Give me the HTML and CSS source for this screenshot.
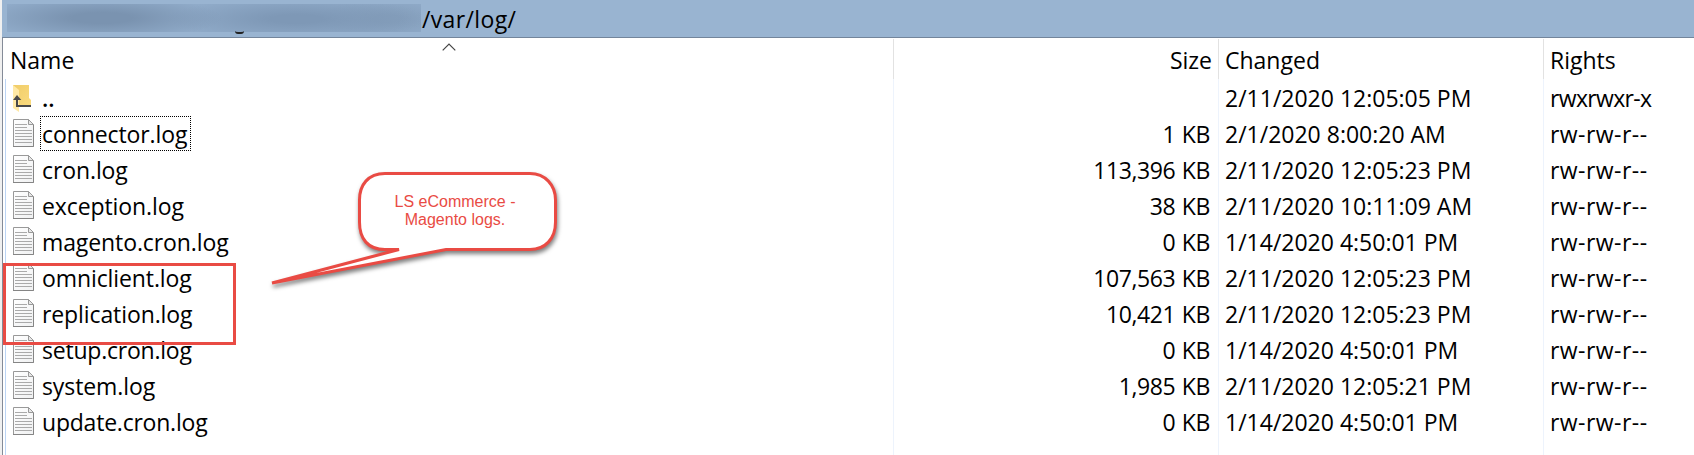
FILE: index.html
```html
<!DOCTYPE html>
<html lang="en">
<head>
<meta charset="utf-8">
<title>/var/log/</title>
<link rel="stylesheet" href="styles.css">
</head>
<body>
<svg class="defs" width="0" height="0" aria-hidden="true">
  <defs>
    <linearGradient id="paper" x1="0" y1="0" x2="1" y2="1"><stop offset="0" stop-color="#fff"/><stop offset="1" stop-color="#f0f1f2"/></linearGradient>
    <linearGradient id="gold" x1="0" y1="0" x2="1" y2="1"><stop offset="0" stop-color="#f0cc68"/><stop offset="1" stop-color="#fbdc80"/></linearGradient>
    <symbol id="file" viewBox="0 0 21 28">
      <path d="M.5.5h15l5 5v22H.5z" fill="url(#paper)" stroke="#999"/>
      <path d="M20.5 6v21.5H0" fill="none" stroke="#858585"/>
      <path d="M15.5.5v5h5z" fill="#e8e8e8" stroke="#999"/>
      <path d="M2 5.500h12M2 8.500h12M2 11.500h17M2 14.500h17M2 17.500h17M2 20.500h17M2 23.500h17" stroke="#aaa"/>
    </symbol>
    <symbol id="folder" viewBox="0 0 21 28">
      <path d="M0 0h16v13l2 2v7H5L0 20z" fill="url(#gold)"/>
      <path d="M0 0l6 5v22l-6-4z" fill="#ffe9a6"/>
      <path d="M4 14v7H18" fill="none" stroke="#4a4a4a" stroke-width="2"/>
      <path d="M0 15L4 10l4.300 5z" fill="#4a4a4a"/>
    </symbol>
  </defs>
</svg>
<div class="window">
  <header class="pathbar"><span class="masked"></span><span class="tail"></span><span class="path">/var/log/</span></header>
  <main class="list">
    <div class="row head"><span class="name">Name</span><span class="size">Size</span><span class="date">Changed</span><span class="rights">Rights</span></div>
    <div class="row"><span class="name"><svg class="icon parent"><use href="#folder"/></svg><b class="up">..</b></span><span class="size"></span><span class="date">2/11/2020 12:05:05 PM</span><span class="rights exec">rwxrwxr-x</span></div>
    <div class="row"><span class="name"><svg class="icon"><use href="#file"/></svg><span class="label focused">connector.log</span></span><span class="size">1 KB</span><span class="date">2/1/2020 8:00:20 AM</span><span class="rights">rw-rw-r--</span></div>
    <div class="row"><span class="name"><svg class="icon"><use href="#file"/></svg><span class="label">cron.log</span></span><span class="size">113,396 KB</span><span class="date">2/11/2020 12:05:23 PM</span><span class="rights">rw-rw-r--</span></div>
    <div class="row"><span class="name"><svg class="icon"><use href="#file"/></svg><span class="label">exception.log</span></span><span class="size">38 KB</span><span class="date">2/11/2020 10:11:09 AM</span><span class="rights">rw-rw-r--</span></div>
    <div class="row"><span class="name"><svg class="icon"><use href="#file"/></svg><span class="label">magento.cron.log</span></span><span class="size">0 KB</span><span class="date">1/14/2020 4:50:01 PM</span><span class="rights">rw-rw-r--</span></div>
    <div class="row"><span class="name"><svg class="icon"><use href="#file"/></svg><span class="label">omniclient.log</span></span><span class="size">107,563 KB</span><span class="date">2/11/2020 12:05:23 PM</span><span class="rights">rw-rw-r--</span></div>
    <div class="row"><span class="name"><svg class="icon"><use href="#file"/></svg><span class="label">replication.log</span></span><span class="size">10,421 KB</span><span class="date">2/11/2020 12:05:23 PM</span><span class="rights">rw-rw-r--</span></div>
    <div class="row"><span class="name"><svg class="icon"><use href="#file"/></svg><span class="label tight">setup.cron.log</span></span><span class="size">0 KB</span><span class="date">1/14/2020 4:50:01 PM</span><span class="rights">rw-rw-r--</span></div>
    <div class="row"><span class="name"><svg class="icon"><use href="#file"/></svg><span class="label">system.log</span></span><span class="size">1,985 KB</span><span class="date">2/11/2020 12:05:21 PM</span><span class="rights">rw-rw-r--</span></div>
    <div class="row"><span class="name"><svg class="icon"><use href="#file"/></svg><span class="label tight">update.cron.log</span></span><span class="size">0 KB</span><span class="date">1/14/2020 4:50:01 PM</span><span class="rights">rw-rw-r--</span></div>
    <div class="row filler"><span class="name"></span><span class="size"></span><span class="date"></span><span class="rights"></span></div>
  </main>
  <svg class="sort" viewBox="0 0 14 8"><path d="M.7 7.300L7 1l6.300 6.300" fill="none" stroke="#444" stroke-width="1.200"/></svg>
  <div class="highlight"></div>
  <div class="callout">
    <svg class="bubble" viewBox="0 0 300 130">
      <path d="M125 13.500H270C285 13.500 295.500 25 295.500 40V62C295.500 79 285 89.500 270 89.500H186L12 123L139 89.500H125C108 89.500 99.500 79 99.500 62V40C99.500 25 108 13.500 125 13.500z" fill="#fff" stroke="#e94b44" stroke-width="3"/>
    </svg>
    <p class="note">LS eCommerce -<br>Magento logs.</p>
  </div>
</div>
</body>
</html>
```
FILE: styles.css
```css
* { box-sizing: border-box; }
body { margin: 0; background: #fff; }
.defs { position: absolute; }
.window {
  position: relative;
  height: 455px;
  overflow: hidden;
  background: #f0f0f0;
  padding-left: 2px;
  font: 23px/38px "Open Sans", "Noto Sans", sans-serif;
  color: #000;
}
.pathbar {
  position: relative;
  display: flex;
  height: 38px;
  padding: 4px 0 0 5px;
  background: #99b4d1;
  border-bottom: 1px solid #73859b;
  overflow: hidden;
}
.masked {
  width: 414px;
  height: 28px;
  background:
    radial-gradient(ellipse 120px 22px at 95px 14px, #7a93b0 25%, transparent),
    radial-gradient(ellipse 130px 22px at 290px 15px, #7e98b6 20%, transparent),
    radial-gradient(ellipse 70px 20px at 380px 15px, #849ebb 20%, transparent),
    #90abc9;
}
.tail {
  position: absolute;
  left: 233px;
  top: 31px;
  width: 9px;
  height: 3px;
  border-bottom: 2px solid #222;
  border-radius: 0 0 4px 4px;
}
.path { line-height: 32px; margin-top: -1px; padding-left: 1px; letter-spacing: .35px; }
.list {
  height: 417px;
  display: flex;
  flex-direction: column;
  background: #fff;
  border-left: 1px solid #848b98;
}
.row {
  display: grid;
  grid-template-columns: 888px 325px 325px 1fr;
  height: 36px;
  flex: none;
  margin-left: 2px;
  border-left: 1px solid #bcd5f5;
}
.row > span { height: 36px; border-right: 1px solid #edf3fc; white-space: pre; }
.row > .rights { border-right: 0; }
.head { height: 41px; padding-top: 1px; border-left-color: transparent; line-height: 43px; }
.head > span { height: 40px; border-right-color: #e2e2e2; }
.filler { flex: 1; height: auto; }
.name { display: flex; padding-left: 7px; }
.head .name { padding-left: 4px; }
.icon { width: 21px; height: 28px; margin: 4px 7px 0 0; flex: none; }
.icon.parent { margin-top: 6px; }
.up { font-weight: 600; padding-left: 1px; }
.label {
  height: 35px;
  margin: 1px 0 0 -1px;
  padding: 0 3px 0 1px;
  border: 1px solid transparent;
  line-height: 35px;
  letter-spacing: -.1px;
}
.tight { letter-spacing: -.22px; }
.focused { border: 1px dotted #000; }
.size { text-align: right; padding-right: 8px; letter-spacing: -.4px; word-spacing: 1px; }
.head .size { padding-right: 6px; letter-spacing: 0; }
.date, .rights { padding-left: 6px; }
.row:not(.head) .rights { letter-spacing: .45px; }
.row .rights.exec { letter-spacing: -.65px; }
.sort { position: absolute; left: 442px; top: 43px; width: 14px; height: 8px; }
.highlight {
  position: absolute;
  left: 3px;
  top: 263px;
  width: 233px;
  height: 82px;
  border: 3px solid #e94b44;
}
.callout { position: absolute; left: 260px; top: 160px; width: 300px; height: 130px; }
.bubble { width: 300px; height: 130px; overflow: visible; filter: drop-shadow(1px 3px 2px rgba(0,0,0,.5)); }
.note {
  position: absolute;
  left: 98px;
  top: 33px;
  width: 194px;
  margin: 0;
  text-align: center;
  font: 16px/18px "Liberation Sans", Arial, sans-serif;
  color: #e94b44;
}
```
